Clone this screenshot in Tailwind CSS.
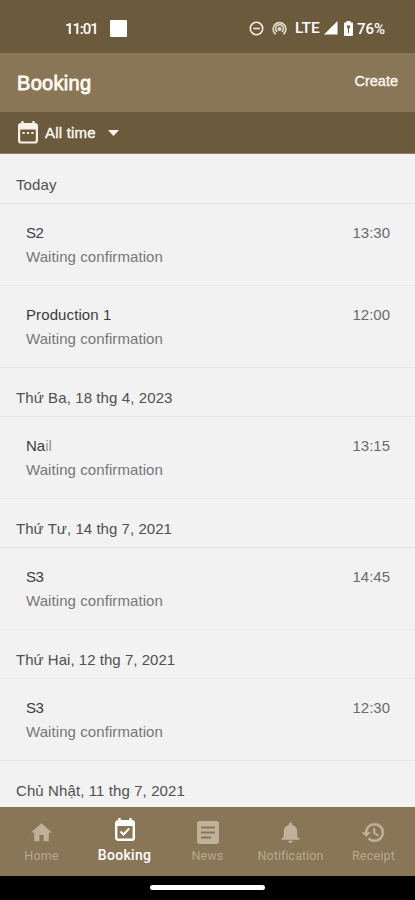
<!DOCTYPE html>
<html lang="vi">
<head>
<meta charset="utf-8">
<meta name="viewport" content="width=device-width, initial-scale=1">
<title>Booking</title>
<script src="https://cdn.jsdelivr.net/npm/@tailwindcss/browser@4"></script>
</head>
<body class="bg-[#f2f2f2] font-['Liberation_Sans',Arial,sans-serif]">
<div class="flex h-[900px] w-[415px] flex-col overflow-hidden">
  <div class="flex h-[53px] shrink-0 items-center bg-[#6c5a3d] pl-[65px] pt-[3px] text-white font-[Roboto,sans-serif]">
    <span class="w-[45px] pt-[2px] text-[15px] font-medium tracking-[-1.1px]">11:01</span>
    <span class="h-[17px] w-[17px] rounded-[1px] bg-white"></span>
    <svg class="ml-[122px] h-[15px] w-[15px]" viewBox="0 0 15 15" fill="none" stroke="#f4eee4" stroke-width="1.6"><circle cx="7.5" cy="7.5" r="6.2"/><path d="M4.2 7.5h6.6"/></svg>
    <svg class="ml-[8px] h-[15px] w-[15px]" viewBox="0 0 15 15" fill="none" stroke="#e6ddce" stroke-width="1.6" stroke-linecap="round"><path d="M3.200 12.800a6.400 6.400 0 1 1 8.600 0M4.800 10.500a3.900 3.900 0 1 1 5.400 0"/><circle cx="7.500" cy="8" r="1.200" fill="#e6ddce"/></svg>
    <span class="ml-[8px] w-[29px] pt-[2px] text-[15.5px] font-medium">LTE</span>
    <svg class="h-[14px] w-[14px]" viewBox="0 0 14 14" fill="#fff"><path d="M13.5 0v13.5H0z"/></svg>
    <svg class="ml-[6px] h-[15px] w-[9px]" viewBox="0 0 9 15" fill="#fff"><path d="M2.5 0h4v1.5H8q1 0 1 1V14q0 1-1 1H1q-1 0-1-1V2.500q0-1 1-1h1.500z"/><path d="M2.500 4.500h4L5 8.500v3.500H4V8.500z" fill="#6c5a3d"/></svg>
    <span class="ml-[4px] pt-[2px] text-[15px] font-medium">76%</span>
  </div>
  <header class="flex h-[59px] shrink-0 items-center justify-between bg-[#897656] pl-[17px] pr-[17px] text-white">
    <h1 class="pt-[1px] text-[20px] tracking-[0.3px] text-[#fffaf3] [-webkit-text-stroke:0.8px_#fffaf3]">Booking</h1>
    <button class="pb-[2px] text-[14.5px] text-[#fffaf3] [-webkit-text-stroke:0.3px_#fffaf3]">Create</button>
  </header>
  <div class="flex h-[42px] shrink-0 items-center border-b border-[#8c7e68] bg-[#6c5a3d] pl-[18px]">
    <svg class="h-[23px] w-[20px]" viewBox="0 0 20 23" fill="none"><path d="M4.500 0v4M15.500 0v4" stroke="#f8f1e7" stroke-width="2.200"/><rect x="1.100" y="3" width="17.800" height="18.500" rx="2" stroke="#f8f1e7" stroke-width="2.200"/><path d="M1 3h18v5.500H1z" fill="#f8f1e7"/><path d="M4.500 12h2.200M8.900 12h2.200M13.300 12h2.200" stroke="#f8f1e7" stroke-width="2"/></svg>
    <span class="ml-[7px] w-[63px] pt-[2px] text-[15px] tracking-[0.2px] text-[#fffaf3] [-webkit-text-stroke:0.35px_#fffaf3]">All time</span>
    <svg class="h-[6px] w-[11px]" viewBox="0 0 11 6" fill="#fffaf3"><path d="M0 0h11L5.500 6z"/></svg>
  </div>
  <main class="flex h-[653px] shrink-0 flex-col overflow-hidden text-[15px] leading-6">
    <h2 class="h-[50px] shrink-0 border-b border-[#e6e6e6] pl-[16px] pt-[19px] tracking-[0.1px] text-[#505050]">Today</h2>
    <div class="flex h-[82px] shrink-0 justify-between border-b border-[#e8e8e8] pl-[26px] pr-[25px] pt-[17px]"><div><p class="tracking-[-0.4px] text-[#3c3c3c]">S2</p><p class="tracking-[0.08px] text-[#777]">Waiting confirmation</p></div><time class="text-[#6b6b6b]">13:30</time></div>
    <div class="flex h-[82px] shrink-0 justify-between border-b border-[#e8e8e8] pl-[26px] pr-[25px] pt-[17px]"><div><p class="tracking-[0.1px] text-[#3c3c3c]">Production 1</p><p class="tracking-[0.08px] text-[#777]">Waiting confirmation</p></div><time class="text-[#6b6b6b]">12:00</time></div>
    <h2 class="h-[49px] shrink-0 border-b border-[#e8e8e8] pl-[16px] pt-[18px] tracking-[0.1px] text-[#505050]">Thứ Ba, 18 thg 4, 2023</h2>
    <div class="flex h-[82px] shrink-0 justify-between border-b border-[#e8e8e8] pl-[26px] pr-[25px] pt-[17px]"><div><p class="text-[#3c3c3c]">Na<span class="text-[#999]">il</span></p><p class="tracking-[0.08px] text-[#777]">Waiting confirmation</p></div><time class="text-[#6b6b6b]">13:15</time></div>
    <h2 class="h-[49px] shrink-0 border-b border-[#e3e3e3] pl-[16px] pt-[18px] tracking-[0.05px] text-[#505050]">Thứ Tư, 14 thg 7, 2021</h2>
    <div class="flex h-[82px] shrink-0 justify-between border-b border-[#ececec] pl-[26px] pr-[25px] pt-[17px]"><div><p class="tracking-[-0.4px] text-[#3c3c3c]">S3</p><p class="tracking-[0.08px] text-[#777]">Waiting confirmation</p></div><time class="text-[#6b6b6b]">14:45</time></div>
    <h2 class="h-[49px] shrink-0 border-b border-[#e8e8e8] pl-[16px] pt-[18px] tracking-[0.03px] text-[#505050]">Thứ Hai, 12 thg 7, 2021</h2>
    <div class="flex h-[82px] shrink-0 justify-between border-b border-[#e8e8e8] pl-[26px] pr-[25px] pt-[17px]"><div><p class="tracking-[-0.4px] text-[#3c3c3c]">S3</p><p class="tracking-[0.08px] text-[#777]">Waiting confirmation</p></div><time class="text-[#6b6b6b]">12:30</time></div>
    <h2 class="h-[49px] shrink-0 pl-[16px] pt-[18px] tracking-[0.1px] text-[#505050]">Chủ Nhật, 11 thg 7, 2021</h2>
  </main>
  <nav class="grid h-[69px] shrink-0 grid-cols-5 bg-[#897656] font-[Roboto,sans-serif] text-[12.5px] text-[#b8a88f]">
    <a class="flex flex-col items-center"><svg class="mt-[13px] h-[25px] w-[25px]" viewBox="0 0 24 24" fill="#c0b19b"><path d="M10 20.500v-6h4v6h5v-8.500h3L12 3 2 12h3v8.500z"/></svg><span class="mt-[2px] tracking-[0.2px]">Home</span></a>
    <a class="flex flex-col items-center text-white"><svg class="mt-[11px] h-[24px] w-[22px]" viewBox="0 0 22 24" fill="none"><path d="M5.500 0v5M16.500 0v5" stroke="#fff" stroke-width="2.400"/><rect x="2.200" y="3.200" width="17.600" height="18.600" rx="2" stroke="#fff" stroke-width="2.400"/><path d="M2 3h18v5H2z" fill="#fff"/><path d="m6.500 13.500 3 3 5.700-6" stroke="#fff" stroke-width="2"/></svg><span class="mt-[3px] text-[14px] font-medium tracking-[0.3px]">Booking</span></a>
    <a class="flex flex-col items-center"><svg class="mt-[14px] h-[23px] w-[22px]" viewBox="0 0 22 23"><rect width="22" height="23" rx="2.500" fill="#c0b19b"/><path d="M4 6.500h14M4 11.500h14M4 16.500h10" stroke="#897656" stroke-width="2"/></svg><span class="mt-[3px] tracking-[0.1px]">News</span></a>
    <a class="flex flex-col items-center"><svg class="mt-[13px] h-[25px] w-[27px]" viewBox="0 0 24 24" preserveAspectRatio="none" fill="#c0b19b"><path d="M12 22c1.100 0 2-.9 2-2h-4c0 1.100.9 2 2 2zm6-6v-5c0-3.070-1.640-5.640-4.500-6.320V4c0-.83-.67-1.500-1.500-1.500s-1.500.67-1.500 1.500v.68C7.630 5.360 6 7.920 6 11v5l-2 2v1h16v-1z"/></svg><span class="mt-[2px] tracking-[0.07px]">Notification</span></a>
    <a class="flex flex-col items-center"><svg class="mt-[13px] h-[25px] w-[25px]" viewBox="0 0 24 24" fill="#c0b19b" stroke="#c0b19b" stroke-width="0.5"><path d="M13 3a9 9 0 0 0-9 9H1l3.890 3.890.07.14L9 12H6c0-3.870 3.130-7 7-7s7 3.130 7 7-3.130 7-7 7c-1.930 0-3.680-.79-4.940-2.060l-1.420 1.420A8.954 8.954 0 0 0 13 21a9 9 0 0 0 0-18zm-1 5v5l4.280 2.540.72-1.210-3.500-2.080V8z"/></svg><span class="mt-[2px] tracking-[0.2px]">Receipt</span></a>
  </nav>
  <div class="flex h-[24px] shrink-0 justify-center bg-black pt-[9px]"><span class="h-[5px] w-[115px] rounded-full bg-white"></span></div>
</div>
</body>
</html>
